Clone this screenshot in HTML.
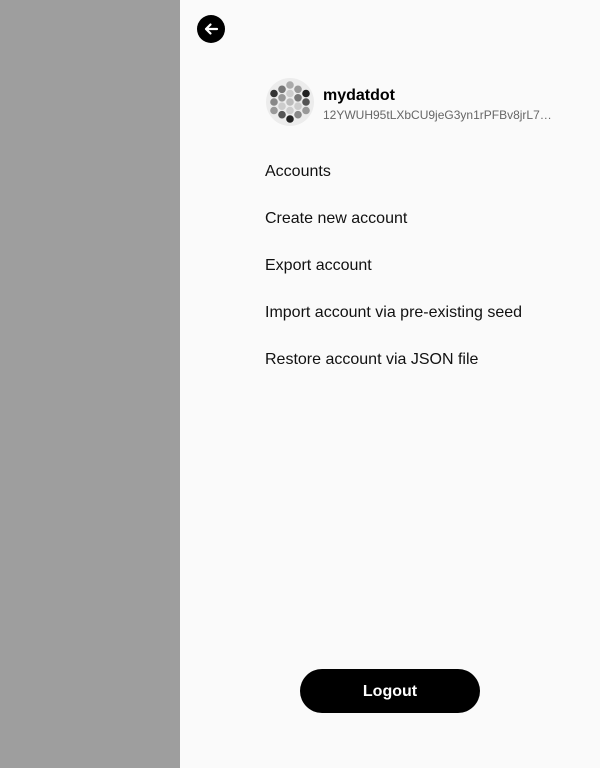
<!DOCTYPE html>
<html><head><style>
body{margin:0;width:600px;height:768px;position:relative;font-family:"Liberation Sans",sans-serif;background:#fafafa;overflow:hidden}
.left{position:absolute;left:0;top:0;width:180px;height:768px;background:#9e9e9e}
.back{position:absolute;left:197px;top:15px;width:28px;height:28px;border-radius:50%;background:#000}
.name{position:absolute;left:323px;top:87px;font-size:16px;font-weight:bold;color:#000}
.addr{position:absolute;left:323px;top:108px;font-size:12px;color:#666}
.item{position:absolute;left:265px;font-size:16px;color:#111}
.btn{position:absolute;left:300px;top:669px;width:180px;height:44px;border-radius:22px;background:#000;color:#fff;font-weight:bold;font-size:16px;text-align:center;line-height:46px}
</style></head><body>
<div class="left"></div>
<div class="back"><svg width="28" height="28" viewBox="0 0 28 28"><path d="M20 14H9M13.5 9.5L9 14l4.5 4.5" stroke="#fff" stroke-width="2.2" fill="none" stroke-linecap="round" stroke-linejoin="round"/></svg></div>
<svg style="position:absolute;left:265px;top:77px" width="50" height="50" viewBox="-25 -25 50 50">
<circle r="24" fill="#ececec"/>
<g>
<circle cx="0" cy="-17" r="3.8" fill="#aaa"/><circle cx="0" cy="-8.5" r="3.8" fill="#ccc"/><circle cx="0" cy="0" r="3.8" fill="#bbb"/><circle cx="0" cy="8.5" r="3.8" fill="#ccc"/><circle cx="0" cy="17" r="3.8" fill="#222"/>
<circle cx="-8" cy="-12.7" r="3.8" fill="#777"/><circle cx="-8" cy="-4.2" r="3.8" fill="#999"/><circle cx="-8" cy="4.2" r="3.8" fill="#ccc"/><circle cx="-8" cy="12.7" r="3.8" fill="#555"/>
<circle cx="8" cy="-12.7" r="3.8" fill="#999"/><circle cx="8" cy="-4.2" r="3.8" fill="#777"/><circle cx="8" cy="4.2" r="3.8" fill="#ccc"/><circle cx="8" cy="12.7" r="3.8" fill="#888"/>
<circle cx="-16" cy="-8.5" r="3.8" fill="#333"/><circle cx="-16" cy="0" r="3.8" fill="#888"/><circle cx="-16" cy="8.5" r="3.8" fill="#999"/>
<circle cx="16" cy="-8.5" r="3.8" fill="#222"/><circle cx="16" cy="0" r="3.8" fill="#555"/><circle cx="16" cy="8.5" r="3.8" fill="#999"/>
</g></svg>
<div class="name">mydatdot</div>
<div class="addr">12YWUH95tLXbCU9jeG3yn1rPFBv8jrL7…</div>
<div class="item" style="top:163px">Accounts</div>
<div class="item" style="top:210px">Create new account</div>
<div class="item" style="top:257px">Export account</div>
<div class="item" style="top:304px">Import account via pre-existing seed</div>
<div class="item" style="top:351px">Restore account via JSON file</div>
<div class="btn">Logout</div>
</body></html>
